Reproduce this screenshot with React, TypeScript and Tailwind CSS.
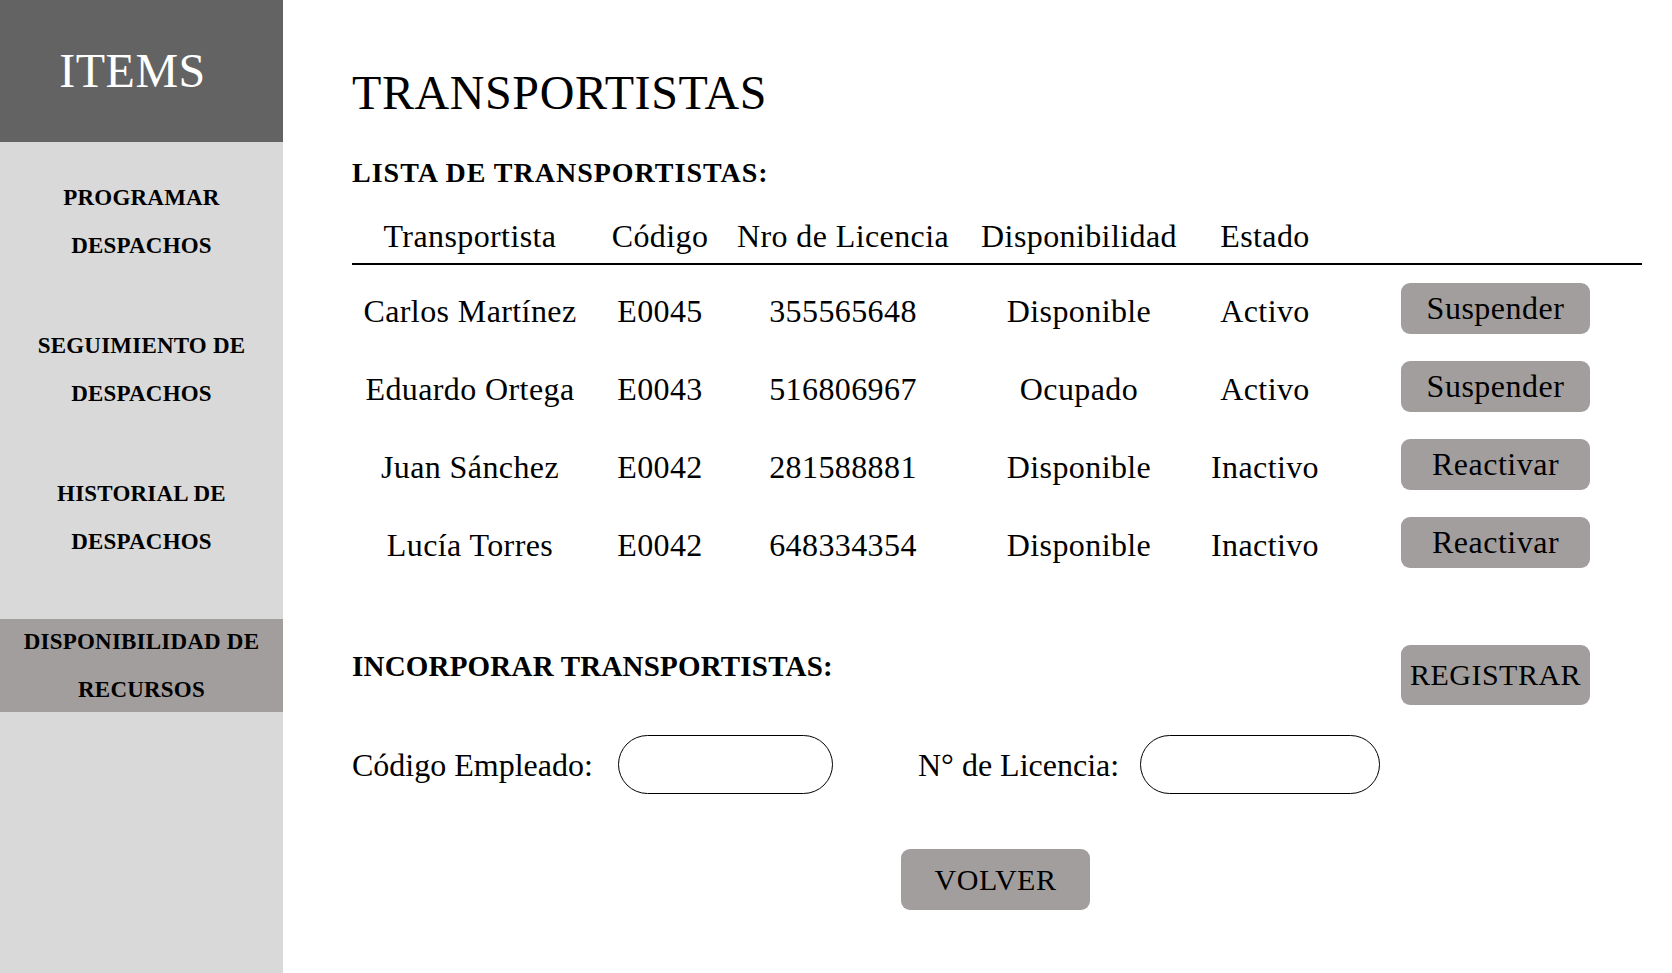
import React from "react";

const rows = [
  { name: "Carlos Martínez", code: "E0045", lic: "355565648", disp: "Disponible", estado: "Activo", action: "Suspender" },
  { name: "Eduardo Ortega", code: "E0043", lic: "516806967", disp: "Ocupado", estado: "Activo", action: "Suspender" },
  { name: "Juan Sánchez", code: "E0042", lic: "281588881", disp: "Disponible", estado: "Inactivo", action: "Reactivar" },
  { name: "Lucía Torres", code: "E0042", lic: "648334354", disp: "Disponible", estado: "Inactivo", action: "Reactivar" },
];

const nav = [
  ["PROGRAMAR", "DESPACHOS"],
  ["SEGUIMIENTO DE", "DESPACHOS"],
  ["HISTORIAL DE", "DESPACHOS"],
  ["DISPONIBILIDAD DE", "RECURSOS"],
];

const cols = "grid grid-cols-[236px_144px_222px_250px_122px_75px_189px] justify-items-center items-center";

export default function App() {
  return (
    <div className="flex min-h-[973px] w-full bg-white text-black font-['Liberation_Serif',serif]">
      {/* Sidebar */}
      <aside className="w-[283px] shrink-0 bg-[#d9d9d9] flex flex-col">
        <div className="h-[142px] bg-[#636363] flex items-center justify-center pr-[18px]">
          <span className="text-[48px] leading-none text-white tracking-[0.5px]">ITEMS</span>
        </div>
        <nav className="mt-[33px] flex flex-col gap-[55px]">
          {nav.map((item, i) => (
            <div
              key={i}
              className={`h-[93px] flex flex-col items-center justify-center font-bold text-[23px] leading-[48px] tracking-[0.2px] ${
                i === 3 ? "bg-[#a29e9e]" : ""
              }`}
            >
              <span>{item[0]}</span>
              <span>{item[1]}</span>
            </div>
          ))}
        </nav>
      </aside>

      {/* Main */}
      <main className="flex-1 pl-[69px] pt-[69px] flex flex-col">
        <h1 className="text-[48px] leading-none tracking-[0.6px]">TRANSPORTISTAS</h1>
        <h2 className="mt-[42px] text-[28px] leading-[28px] font-bold tracking-[1px]">LISTA DE TRANSPORTISTAS:</h2>

        <div className="mt-[33px] w-[1290px] border-b-2 border-black pb-[11px]">
          <div className={`${cols} text-[32px] leading-[32px] tracking-[0.4px]`}>
            <span>Transportista</span>
            <span>Código</span>
            <span>Nro de Licencia</span>
            <span>Disponibilidad</span>
            <span>Estado</span>
          </div>
        </div>

        <div className="mt-[7px] flex flex-col">
          {rows.map((r, i) => (
            <div key={i} className={`${cols} h-[78px] text-[32px] leading-none tracking-[0.4px]`}>
              <span>{r.name}</span>
              <span>{r.code}</span>
              <span>{r.lic}</span>
              <span>{r.disp}</span>
              <span>{r.estado}</span>
              <span />
              <button className="w-[189px] h-[51px] rounded-[9px] bg-[#a29e9e] text-[32px] leading-none tracking-[0.5px] -mt-[6px]">
                {r.action}
              </button>
            </div>
          ))}
        </div>

        <div className="mt-[61px] w-[1238px] flex justify-between items-start">
          <h2 className="pt-[7px] text-[29px] leading-[29px] font-bold tracking-[0.2px]">INCORPORAR TRANSPORTISTAS:</h2>
          <button className="w-[189px] h-[60px] rounded-[9px] bg-[#a29e9e] text-[30px] leading-none tracking-[0.5px]">
            REGISTRAR
          </button>
        </div>

        <div className="mt-[30px] flex items-center text-[32px] leading-none">
          <span className="w-[266px]">Código Empleado:</span>
          <input className="w-[215px] h-[59px] rounded-[30px] border border-black outline-none" />
          <span className="ml-[85px] w-[222px]">N° de Licencia:</span>
          <input className="w-[240px] h-[59px] rounded-[30px] border border-black outline-none" />
        </div>

        <div className="mt-[55px] ml-[549px]">
          <button className="w-[189px] h-[61px] rounded-[9px] bg-[#a29e9e] text-[30px] leading-none tracking-[0.5px]">
            VOLVER
          </button>
        </div>
      </main>
    </div>
  );
}
